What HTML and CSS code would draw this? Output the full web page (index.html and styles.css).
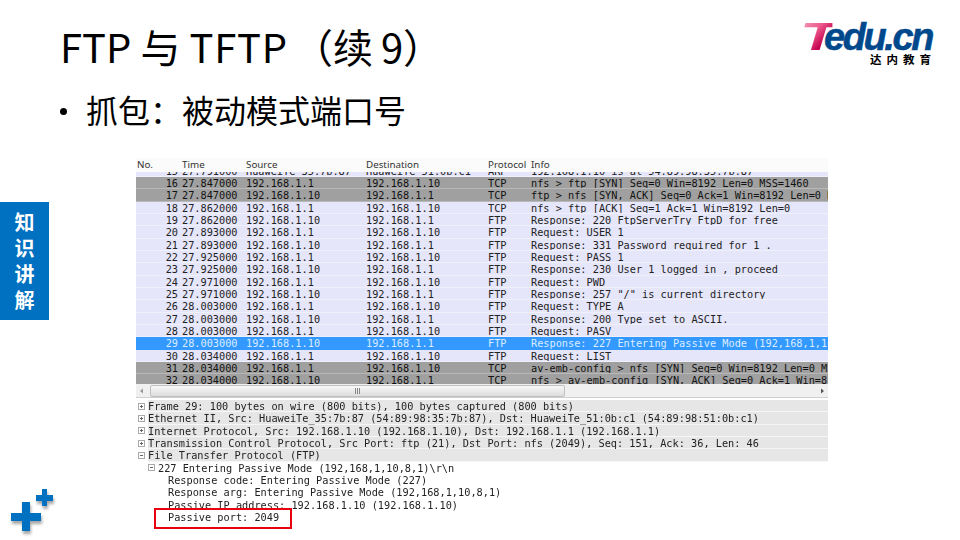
FILE: index.html
```html
<!DOCTYPE html>
<html lang="zh">
<head>
<meta charset="utf-8">
<title>FTP与TFTP（续9）</title>
<link rel="stylesheet" href="styles.css">
</head>
<body>
<div class="slide">
  <header class="head">
    <h1 class="title">FTP<span class="t-yu">与</span><span class="t-tftp">TFTP</span><span class="t-paren">（续</span><span class="t-nine">9）</span></h1>
    <div class="logo">
      <div class="logo-word"><span class="logo-t">T</span>edu.cn</div>
      <div class="logo-sub">达内教育</div>
    </div>
  </header>
  <ul class="bullets"><li>抓包：被动模式端口号</li></ul>
  <div class="body">
    <aside class="rail">
      <div class="tab"><span>知</span><span>识</span><span>讲</span><span>解</span></div>
      <svg class="plus" width="50" height="50" viewBox="0 0 50 50">
        <defs><filter id="sh" x="-30%" y="-30%" width="170%" height="170%"><feDropShadow dx="1" dy="3" stdDeviation="1.6" flood-color="#000" flood-opacity=".35"/></filter></defs>
        <path filter="url(#sh)" fill="#0070c0" d="M22 1h8v11h11v8H30v10h-8V20H11v-8h11z" transform="translate(-11 12)"/>
        <path filter="url(#sh)" fill="#0070c0" d="M42 489h5v6h6v6h-6v5h-5v-5h-6v-6h6z" transform="translate(-11 -489)"/>
      </svg>
    </aside>
    <section class="capture">
      <div class="cols hdr"><span class="r">No.</span><span>Time</span><span>Source</span><span>Destination</span><span>Protocol</span><span>Info</span></div>
      <div class="list">
        <div class="cols row arp"><span class="n">15</span><span>27.791000</span><span>HuaweiTe_35:7b:87</span><span>HuaweiTe_51:0b:c1</span><span>ARP</span><span>192.168.1.10 is at 54:89:98:35:7b:87</span></div>
        <div class="cols row tcp"><span class="n">16</span><span>27.847000</span><span>192.168.1.1</span><span>192.168.1.10</span><span>TCP</span><span>nfs &gt; ftp [SYN] Seq=0 Win=8192 Len=0 MSS=1460</span></div>
        <div class="cols row tcp"><span class="n">17</span><span>27.847000</span><span>192.168.1.10</span><span>192.168.1.1</span><span>TCP</span><span>ftp &gt; nfs [SYN, ACK] Seq=0 Ack=1 Win=8192 Len=0 MSS</span></div>
        <div class="cols row"><span class="n">18</span><span>27.862000</span><span>192.168.1.1</span><span>192.168.1.10</span><span>TCP</span><span>nfs &gt; ftp [ACK] Seq=1 Ack=1 Win=8192 Len=0</span></div>
        <div class="cols row"><span class="n">19</span><span>27.862000</span><span>192.168.1.10</span><span>192.168.1.1</span><span>FTP</span><span>Response: 220 FtpServerTry FtpD for free</span></div>
        <div class="cols row"><span class="n">20</span><span>27.893000</span><span>192.168.1.1</span><span>192.168.1.10</span><span>FTP</span><span>Request: USER 1</span></div>
        <div class="cols row"><span class="n">21</span><span>27.893000</span><span>192.168.1.10</span><span>192.168.1.1</span><span>FTP</span><span>Response: 331 Password required for 1 .</span></div>
        <div class="cols row"><span class="n">22</span><span>27.925000</span><span>192.168.1.1</span><span>192.168.1.10</span><span>FTP</span><span>Request: PASS 1</span></div>
        <div class="cols row"><span class="n">23</span><span>27.925000</span><span>192.168.1.10</span><span>192.168.1.1</span><span>FTP</span><span>Response: 230 User 1 logged in , proceed</span></div>
        <div class="cols row"><span class="n">24</span><span>27.971000</span><span>192.168.1.1</span><span>192.168.1.10</span><span>FTP</span><span>Request: PWD</span></div>
        <div class="cols row"><span class="n">25</span><span>27.971000</span><span>192.168.1.10</span><span>192.168.1.1</span><span>FTP</span><span>Response: 257 "/" is current directory</span></div>
        <div class="cols row"><span class="n">26</span><span>28.003000</span><span>192.168.1.1</span><span>192.168.1.10</span><span>FTP</span><span>Request: TYPE A</span></div>
        <div class="cols row"><span class="n">27</span><span>28.003000</span><span>192.168.1.10</span><span>192.168.1.1</span><span>FTP</span><span>Response: 200 Type set to ASCII.</span></div>
        <div class="cols row"><span class="n">28</span><span>28.003000</span><span>192.168.1.1</span><span>192.168.1.10</span><span>FTP</span><span>Request: PASV</span></div>
        <div class="cols row sel"><span class="n">29</span><span>28.003000</span><span>192.168.1.10</span><span>192.168.1.1</span><span>FTP</span><span>Response: 227 Entering Passive Mode (192,168,1,10,8,1)</span></div>
        <div class="cols row"><span class="n">30</span><span>28.034000</span><span>192.168.1.1</span><span>192.168.1.10</span><span>FTP</span><span>Request: LIST</span></div>
        <div class="cols row tcp"><span class="n">31</span><span>28.034000</span><span>192.168.1.1</span><span>192.168.1.10</span><span>TCP</span><span>av-emb-config &gt; nfs [SYN] Seq=0 Win=8192 Len=0 MSS=1460</span></div>
        <div class="cols row tcp"><span class="n">32</span><span>28.034000</span><span>192.168.1.10</span><span>192.168.1.1</span><span>TCP</span><span>nfs &gt; av-emb-config [SYN, ACK] Seq=0 Ack=1 Win=8192</span></div>
      </div>
      <div class="scroll">
        <svg class="arrow" width="8" height="8" viewBox="0 0 8 8"><path d="M5 1.5v5L2 4z" fill="#999"/></svg>
        <div class="track"><div class="thumb"><i></i><i></i><i></i></div></div>
        <svg class="arrow" width="8" height="8" viewBox="0 0 8 8"><path d="M3 1.5v5L6 4z" fill="#555"/></svg>
      </div>
      <div class="tree">
        <div class="node top"><b class="box plusbox"></b><span>Frame 29: 100 bytes on wire (800 bits), 100 bytes captured (800 bits)</span></div>
        <div class="node top"><b class="box plusbox"></b><span>Ethernet II, Src: HuaweiTe_35:7b:87 (54:89:98:35:7b:87), Dst: HuaweiTe_51:0b:c1 (54:89:98:51:0b:c1)</span></div>
        <div class="node top"><b class="box plusbox"></b><span>Internet Protocol, Src: 192.168.1.10 (192.168.1.10), Dst: 192.168.1.1 (192.168.1.1)</span></div>
        <div class="node top"><b class="box plusbox"></b><span>Transmission Control Protocol, Src Port: ftp (21), Dst Port: nfs (2049), Seq: 151, Ack: 36, Len: 46</span></div>
        <div class="node top"><b class="box"></b><span>File Transfer Protocol (FTP)</span></div>
        <div class="node lvl1"><b class="box"></b><span>227 Entering Passive Mode (192,168,1,10,8,1)\r\n</span></div>
        <div class="node lvl2"><span>Response code: Entering Passive Mode (227)</span></div>
        <div class="node lvl2"><span>Response arg: Entering Passive Mode (192,168,1,10,8,1)</span></div>
        <div class="node lvl2"><span>Passive IP address: 192.168.1.10 (192.168.1.10)</span></div>
        <div class="node lvl2 mark"><span>Passive port: 2049</span></div>
      </div>
    </section>
  </div>
</div>
</body>
</html>
```
FILE: styles.css
```css
* { box-sizing: border-box; }
html, body { margin: 0; padding: 0; background: #fff; }
.slide {
  width: 960px; height: 540px; overflow: hidden; background: #fff;
  display: flex; flex-direction: column;
  font-family: "Noto Sans CJK SC", "Noto Sans", sans-serif; color: #000;
}
.head { height: 88px; padding: 0 28px 0 60px; display: flex; justify-content: space-between; align-items: flex-start; flex: none; }
.title { margin: 16px 0 0; font-size: 40px; line-height: 60px; font-weight: 400; white-space: nowrap; }
.t-yu { margin: 0 9px 0 9px; }
.t-tftp { letter-spacing: .8px; }
.t-paren { margin-left: 5px; }
.t-nine { margin-left: 8px; }
.logo { margin-top: 21px; width: 128px; display: flex; flex-direction: column; align-items: flex-end; }
.logo-word {
  font-family: "Liberation Sans", sans-serif; font-weight: 700; font-style: italic;
  font-size: 38px; line-height: 32px; letter-spacing: -2.4px; color: #00488c; white-space: nowrap;
  -webkit-text-stroke: .5px #00488c;
}
.logo-t {
  display: inline-block; font-size: 39px; -webkit-text-stroke: 0;
  transform: scaleX(1.55); transform-origin: left center; margin-right: 3px;
  background: linear-gradient(120deg, #f4a0b8 0%, #ec5a8c 40%, #c4004f 70%);
  -webkit-background-clip: text; background-clip: text; color: transparent;
}
.logo-sub { font-size: 11.5px; line-height: 12px; font-weight: 700; letter-spacing: 5px; margin-right: -4px; }
.bullets { margin: 0; padding: 0 0 0 86px; list-style: none; height: 70px; flex: none; }
.bullets li { position: relative; font-size: 32px; line-height: 48px; top: -3px; }
.bullets li::before { content: ""; position: absolute; left: -26px; top: 23px; width: 7px; height: 7px; border-radius: 50%; background: #000; }
.body { flex: 1; display: flex; min-height: 0; }
.rail { width: 136px; flex: none; display: flex; flex-direction: column; align-items: flex-start; padding-top: 44px; }
.tab {
  width: 49px; height: 118px; background: #0070c0; color: #fff;
  font-size: 20px; line-height: 26px; font-weight: 700;
  display: flex; flex-direction: column; align-items: center; justify-content: center;
}
.plus { margin: 169px 0 0 11px; display: block; overflow: visible; }
.capture {
  width: 692px; flex: none; display: flex; flex-direction: column;
  font-family: "DejaVu Sans Mono", monospace; font-size: 10.26px; color: #222;
  filter: blur(0.35px);
}
.cols { display: grid; grid-template-columns: 46px 64px 120px 122px 43px 1fr; column-gap: 0; white-space: nowrap; }
.cols > span { overflow: hidden; }
.hdr { height: 14px; font-family: "Noto Sans", sans-serif; font-size: 9.8px; line-height: 13px; background: #fbfbfb; color: #333; }
.hdr .r { padding-left: 1px; }
.list { height: 212px; overflow: hidden; background: #e6e6fa; }
.row { height: 12.33px; line-height: 12.33px; background: #e6e6fa; border-bottom: 1px solid #f0f0fd; }
.row .n { text-align: right; padding-right: 4px; }
.arp { margin-top: -7.3px; }
.tcp { background: #a0a0a0; color: #111; border-bottom-color: #b8b8b8; }
.sel { background: #3399ff; color: #dcecff; border-bottom-color: #3399ff; }
.scroll { height: 14px; background: #f0f0f0; display: flex; align-items: center; border-bottom: 1px solid #cfcfcf; }
.arrow { flex: none; margin: 0 2px; }
.track { flex: 1; height: 12px; }
.thumb { width: 415px; height: 100%; margin-left: 2px; background: linear-gradient(#f8f8f8, #dcdcdc); border: 1px solid #c0c0c0; border-radius: 2px; display: flex; align-items: center; justify-content: center; gap: 1px; }
.thumb i { width: 1px; height: 6px; background: #888; }
.tree { padding-top: 2px; }
.node { height: 12.33px; line-height: 12.33px; display: flex; align-items: center; white-space: nowrap; }
.top { padding-left: 2px; }
.top > span { flex: 1; height: 100%; margin-left: 3px; background: #e6e6e6; border-bottom: 1px solid #f6f6f6; }
.lvl1 { padding-left: 12px; }
.lvl1 > span { margin-left: 3px; }
.lvl2 { padding-left: 32px; }
.box { flex: none; width: 7px; height: 7px; border: 1px solid #aaa; position: relative; display: block; background: #fff; }
.box::before { content: ""; position: absolute; left: 1px; top: 2px; width: 3px; height: 1px; background: #666; }
.plusbox::after { content: ""; position: absolute; left: 2px; top: 1px; width: 1px; height: 3px; background: #666; }
.mark { position: relative; }
.mark::after { content: ""; position: absolute; left: 18px; top: -3px; width: 134px; height: 17px; border: 2px solid #e8000e; }
```
